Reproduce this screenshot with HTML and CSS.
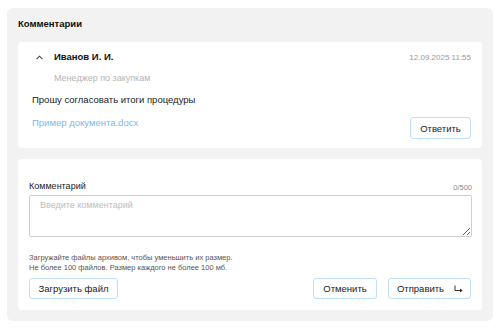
FILE: index.html
```html
<!DOCTYPE html>
<html lang="ru">
  <head>
    <meta charset="UTF-8" />
    <meta name="viewport" content="width=device-width, initial-scale=1.0" />
    <title>Комментарии</title>
    <link rel="stylesheet" href="styles.css">
  </head>
  <body>
    <div class="panel">
      <div class="panel-title">Комментарии</div>

      <div class="card comment">
        <div class="comment-head">
          <div class="author">
            <svg class="chevron" viewBox="0 0 7 5">
              <polyline points="0.6,4.2 3.5,1.2 6.4,4.2" />
            </svg>
            <span class="author-name">Иванов И. И.</span>
          </div>
          <span class="comment-date">12.09.2025 11:55</span>
        </div>
        <div class="author-role">Менеджер по закупкам</div>
        <div class="comment-text">Прошу согласовать итоги процедуры</div>
        <div class="comment-foot">
          <a class="file-link" href="#">Пример документа.docx</a>
          <button class="btn">Ответить</button>
        </div>
      </div>

      <div class="card reply">
        <div class="field-head">
          <label class="field-label" for="comment">Комментарий</label>
          <span class="counter">0/500</span>
        </div>
        <textarea id="comment" class="field-input" placeholder="Введите комментарий"></textarea>
        <div class="hint">
          Загружайте файлы архивом, чтобы уменьшить их размер.<br>
          Не более 100 файлов. Размер каждого не более 100 мб.
        </div>
        <div class="actions">
          <button class="btn btn-upload">Загрузить файл</button>
          <div class="actions-right">
            <button class="btn btn-cancel">Отменить</button>
            <button class="btn btn-send">
              Отправить
              <svg class="send-icon" viewBox="0 0 10 8">
                <path d="M1 0.5V5.5H7" />
                <path d="M6 3.5L8.8 5.5L6 7.5Z" class="arrow-head" />
              </svg>
            </button>
          </div>
        </div>
      </div>
    </div>
  </body>
</html>
```

FILE: styles.css
```css
* {
  margin: 0;
  padding: 0;
  box-sizing: border-box;
}

body {
  font-family: "Liberation Sans", Arial, sans-serif;
  background-color: #ffffff;
  color: #222;
  padding: 8px 7px;
}

.panel {
  width: 486px;
  background-color: #f2f2f2;
  border-radius: 6px;
  padding: 10px 11px 11px;
  display: flex;
  flex-direction: column;
}

.panel-title {
  font-size: 9.5px;
  font-weight: bold;
  line-height: 12px;
  margin-bottom: 12px;
  color: #111;
}

.card {
  background-color: #ffffff;
  border-radius: 4px;
}

.comment {
  height: 106px;
  padding: 9px 11px 9px 14px;
  margin-bottom: 11px;
  display: flex;
  flex-direction: column;
}

.comment-head {
  display: flex;
  justify-content: space-between;
  align-items: center;
  height: 12px;
}

.author {
  display: flex;
  align-items: center;
}

.chevron {
  width: 7px;
  height: 5px;
  margin-left: 4px;
  margin-right: 11px;
  fill: none;
  stroke: #444;
  stroke-width: 1.1;
}

.author-name {
  font-size: 9.5px;
  font-weight: bold;
  line-height: 12px;
  color: #111;
}

.comment-date {
  font-size: 8px;
  color: #9a9a9a;
}

.author-role {
  font-size: 9px;
  line-height: 12px;
  color: #b5b5b5;
  padding-left: 22px;
  margin-top: 9px;
}

.comment-text {
  font-size: 9.5px;
  line-height: 12px;
  color: #1a1a1a;
  margin-top: 10px;
}

.comment-foot {
  display: flex;
  justify-content: space-between;
  align-items: flex-start;
  margin-top: 11px;
}

.file-link {
  font-size: 9.5px;
  line-height: 12px;
  color: #7ab8ee;
  text-decoration: none;
}

.btn {
  font-family: "Liberation Sans", Arial, sans-serif;
  font-size: 9.5px;
  color: #222;
  background-color: #ffffff;
  border: 1px solid #bfe0fb;
  border-radius: 3px;
  height: 22px;
  padding: 0;
  white-space: nowrap;
  display: flex;
  align-items: center;
  justify-content: center;
  cursor: pointer;
}

.comment .btn {
  width: 61px;
}

.reply {
  height: 151px;
  padding: 21px 10px 11px 11px;
  display: flex;
  flex-direction: column;
}

.field-head {
  display: flex;
  justify-content: space-between;
  align-items: flex-end;
  height: 12px;
}

.field-label {
  font-size: 9px;
  line-height: 12px;
  color: #222;
}

.counter {
  font-size: 7.5px;
  line-height: 10px;
  color: #888;
  margin-bottom: -1px;
}

.field-input {
  margin-top: 3px;
  height: 42px;
  width: 100%;
  border: 1px solid #cfcfcf;
  border-radius: 2px;
  padding: 4px 10px;
  font-family: "Liberation Sans", Arial, sans-serif;
  font-size: 9px;
  color: #222;
  resize: vertical;
}

.field-input::placeholder {
  color: #bdbdbd;
}

.hint {
  margin-top: 16px;
  font-size: 7.5px;
  line-height: 10px;
  color: #555;
}

.actions {
  margin-top: 5px;
  display: flex;
  justify-content: space-between;
}

.actions .btn {
  height: 21px;
}

.btn-upload {
  width: 89px;
}

.actions-right {
  display: flex;
  gap: 11px;
  margin-right: 1px;
}

.btn-cancel {
  width: 64px;
}

.btn-send {
  width: 83px;
  gap: 10px;
  padding-left: 2px;
}

.send-icon {
  width: 10px;
  height: 8px;
  flex-shrink: 0;
  fill: none;
  stroke: #333;
  stroke-width: 1;
}

.send-icon .arrow-head {
  fill: #333;
  stroke: none;
}
```
